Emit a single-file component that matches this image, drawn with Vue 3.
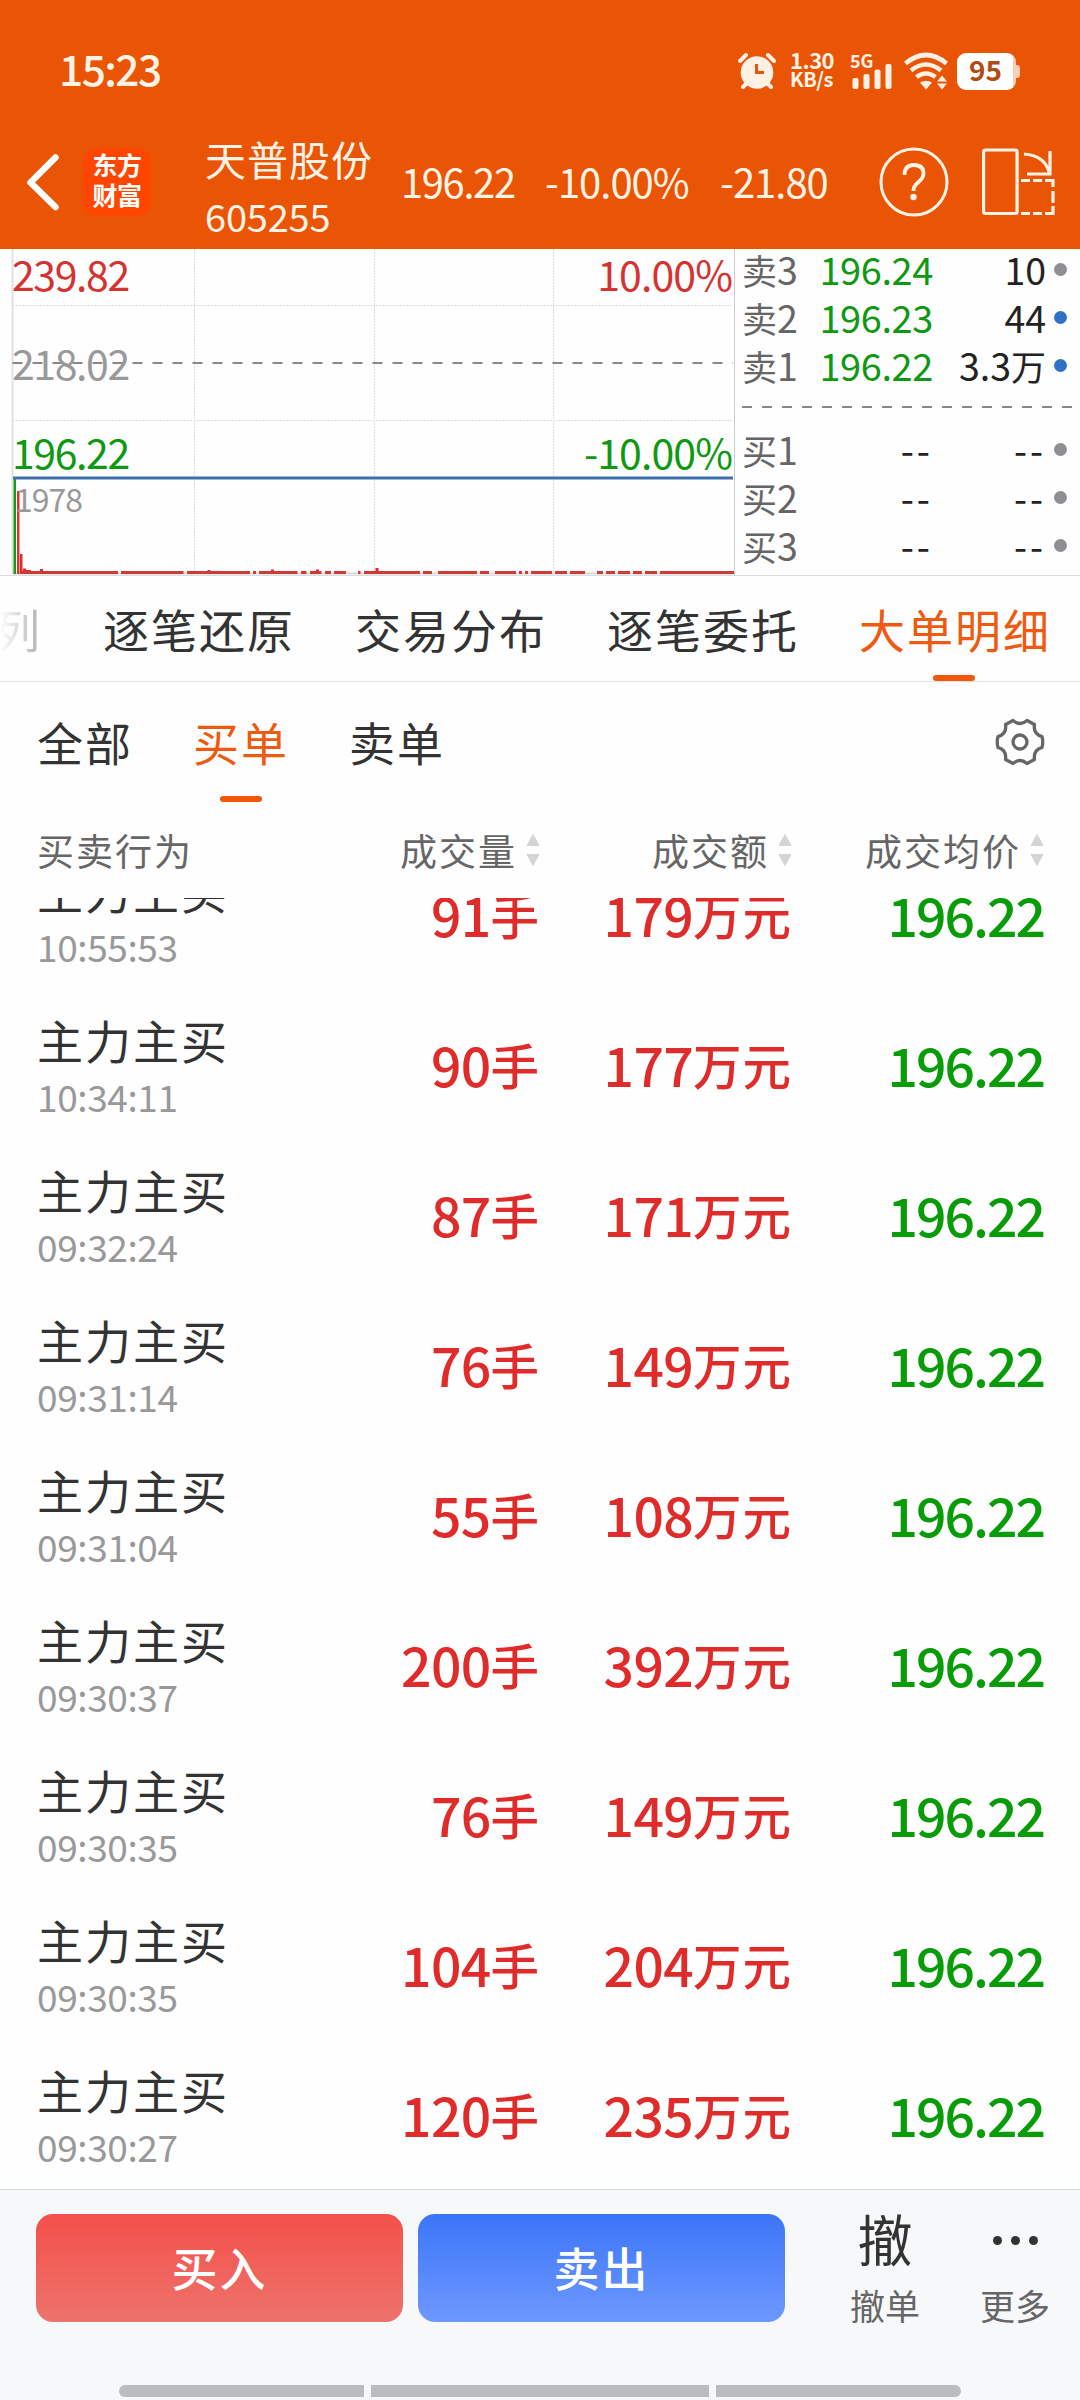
<script setup>
import {ref} from "vue"

const quote = {name: "天普股份", code: "605255", price: "196.22", percent: "-10.00%", change: "-21.80"}

const sells = [
  {label: "卖", level: 3, price: "196.24", amount: "10", unit: "", dot: "gray"},
  {label: "卖", level: 2, price: "196.23", amount: "44", unit: "", dot: "blue"},
  {label: "卖", level: 1, price: "196.22", amount: "3.3", unit: "万", dot: "blue"},
]
const buys = [1, 2, 3]

const tabs = ["逐笔还原", "交易分布", "逐笔委托", "大单明细"]
const activeTab = ref("大单明细")
const filters = ["全部", "买单", "卖单"]
const activeFilter = ref("买单")

const columns = ["成交量", "成交额", "成交均价"]
const orders = [
  {time: "10:55:53", volume: 91, amount: 179},
  {time: "10:34:11", volume: 90, amount: 177},
  {time: "09:32:24", volume: 87, amount: 171},
  {time: "09:31:14", volume: 76, amount: 149},
  {time: "09:31:04", volume: 55, amount: 108},
  {time: "09:30:37", volume: 200, amount: 392},
  {time: "09:30:35", volume: 76, amount: 149},
  {time: "09:30:35", volume: 104, amount: 204},
  {time: "09:30:27", volume: 120, amount: 235},
]

// 成交量柱：[起点, 终点]，连续有成交的分钟合并成一段
const volumes = [
  [22, 118], [121, 183.5], [187, 250], [253, 256], [259, 297.5], [301, 306.5], [310, 321.5],
  [325, 331], [334, 346], [358, 360.5], [364, 420], [423, 432], [438, 477], [480, 489],
  [495, 516], [519, 522], [525, 528], [531, 552], [555, 567], [570, 585], [597, 603],
  [606, 615], [618, 630], [633, 642], [645, 657], [660, 734],
]
</script>

<template>
  <div class="page">
    <header class="top">
      <div class="status">
        <span class="clock">15:23</span>
        <svg class="alarm" width="38" height="38" viewBox="0 0 38 38">
          <circle cx="19" cy="20.500" r="16.300" fill="#fff0e6" />
          <path d="M2 9 L8 3 M30 3 L36 9" stroke="#fff0e6" stroke-width="4" stroke-linecap="round" />
          <path d="M8 32 L5 35 M30 32 L33 35" stroke="#fff0e6" stroke-width="4" stroke-linecap="round" />
          <path d="M18.500 12 V20.500 H26" fill="none" stroke="#e95504" stroke-width="3" />
        </svg>
        <div class="speed"><span>1.30</span><span class="kb">KB/s</span></div>
        <svg class="signal" width="44" height="38" viewBox="0 0 44 38">
          <text class="net" x="0" y="15.500">5G</text>
          <rect x="2.500" y="26" width="6" height="11" rx="2" />
          <rect x="13.500" y="22" width="6" height="15" rx="2" />
          <rect x="24.500" y="17.500" width="6" height="19.500" rx="2" />
          <rect x="35.500" y="12" width="6" height="25" rx="2" />
        </svg>
        <svg class="wifi" width="46" height="38" viewBox="0 0 46 38">
          <g fill="none" stroke="#fff0e6" stroke-width="4.600">
            <path d="M2.500 11.500 Q23 -5.500 43.500 11.500" />
            <path d="M8 18.500 Q23 6.500 38 18.500" />
            <path d="M13.500 25 Q23 18 32.500 25" />
          </g>
          <path d="M17 30.500 Q23 27 29 30.500 L23 37.500 Z" fill="#fff0e6" />
          <path d="M34 29.500 L39 23.500 L44 29.500 Z M34 31.500 L39 37.500 L44 31.500 Z" fill="#fff0e6" />
        </svg>
        <div class="battery"><span>95</span></div>
      </div>
      <div class="nav">
        <svg class="back" width="34" height="58" viewBox="0 0 34 58">
          <path d="M29.500 4.500 L4.500 29.500 L29.500 54" fill="none" stroke="#fff" stroke-width="6.500" stroke-linecap="round" stroke-linejoin="round" />
        </svg>
        <div class="logo"><span>东方</span><span>财富</span></div>
        <div class="stock">
          <span class="name">{{ quote.name }}</span>
          <span class="code">{{ quote.code }}</span>
        </div>
        <span class="price">{{ quote.price }}</span>
        <span class="percent">{{ quote.percent }}</span>
        <span class="change">{{ quote.change }}</span>
        <svg class="help" width="70" height="70" viewBox="0 0 70 70">
          <circle cx="35" cy="35" r="33" fill="none" stroke="#fff3e6" stroke-width="3" />
          <path d="M25.500 28 Q25.500 18 35 18 Q44.500 18 44.500 26.500 Q44.500 31 39 35.500 Q34.500 39 34.500 44" fill="none" stroke="#fff3e6" stroke-width="3.800" />
          <circle cx="34.500" cy="50" r="3.200" fill="#fff3e6" />
        </svg>
        <svg class="rotate" width="74" height="70" viewBox="0 0 74 70" fill="none" stroke="#fff3e6" stroke-width="3.200">
          <rect x="2.600" y="3" width="33.500" height="63.500" rx="2" />
          <path d="M43 7 C57 8 66 15 68.500 27" />
          <path d="M69 4 V27 H46" />
          <path d="M40 33.500 H49 M52 33.500 H61 M64 33.500 H72 V40 M72 44 V56 M72 59 V66.500 H64 M61 66.500 H52 M49 66.500 H40" />
        </svg>
      </div>
    </header>

    <section class="market">
      <svg class="chart" width="735" height="327" viewBox="0 249 735 327">
        <g stroke="#dcdcdc" stroke-dasharray="2 1">
          <path d="M194.500 249 V573 M374.500 249 V573 M553.500 249 V573 M13 305.500 H733 M13 420.500 H733" fill="none" />
        </g>
        <path d="M12.500 249 V574" stroke="#e2e2e2" stroke-width="2" />
        <path d="M734.500 249 V576" stroke="#ccc" />
        <path d="M13 573.500 H734" stroke="#d8d8d8" stroke-width="2" />
        <path d="M12.500 363 H733" stroke="#888" stroke-width="2" stroke-dasharray="10 10" />
        <text class="num gray" x="12" y="380">218.02</text>
        <text class="num red" x="12" y="291">239.82</text>
        <text class="num green" x="12" y="469">196.22</text>
        <text class="num red end" x="732" y="291">10.00%</text>
        <text class="num green end" x="732" y="469">-10.00%</text>
        <rect x="17" y="491" width="2.500" height="83" fill="#d83431" />
        <rect x="20" y="554" width="2.500" height="20" fill="#e02b2b" />
        <path d="M23 574 V568.500 H26 V570 H31 V571 H40 V569 H43 V574 Z M207.500 570 h3 v4 h-3 Z M271 569.500 h3 v4 h-3 Z M316 569.500 h3 v4 h-3 Z M375.500 568 h3 v6 h-3 Z" fill="#e02b2b" />
        <rect v-for="v in volumes" :key="v[0]" :x="v[0]" y="571" :width="v[1] - v[0]" height="3" fill="#cf3a37" />
        <text class="vol" x="15" y="511.500">1978</text>
        <rect x="13.500" y="478" width="2.500" height="96" fill="#189a1c" />
        <path d="M13 478 H733" stroke="#3f70ae" stroke-width="3" />
      </svg>
      <div class="book">
        <div v-for="s in sells" :key="s.level" class="level">
          <span class="label">{{ s.label }}<b>{{ s.level }}</b></span>
          <span class="bid">{{ s.price }}</span>
          <span class="qty">{{ s.amount }}<i v-if="s.unit">{{ s.unit }}</i></span>
          <span class="dot" :class="s.dot"></span>
        </div>
        <svg class="split" width="338" height="36" viewBox="0 0 338 36">
          <path d="M7 18 H338" stroke="#888" stroke-width="2" stroke-dasharray="10 10" />
        </svg>
        <div v-for="n in buys" :key="n" class="level">
          <span class="label">买<b>{{ n }}</b></span>
          <span class="bid none">--</span>
          <span class="qty none">--</span>
          <span class="dot gray"></span>
        </div>
      </div>
    </section>

    <nav class="tabs">
      <span class="cut">列</span>
      <span v-for="t in tabs" :key="t" class="tab" :class="{active: t === activeTab}" @click="activeTab = t">{{ t }}</span>
    </nav>

    <div class="filters">
      <span v-for="f in filters" :key="f" class="filter" :class="{active: f === activeFilter}" @click="activeFilter = f">{{ f }}</span>
      <svg class="gear" width="50" height="50" viewBox="-25 -25 50 50" fill="none" stroke="#666" stroke-width="3.300" stroke-linejoin="round">
        <path d="M-7 -21.500 Q0 -15.500 7 -21.500 L14.500 -17.500 Q13 -8 22 -5.500 Q23.500 0 22 5.500 Q13 8 14.500 17.500 L7 21.500 Q0 15.500 -7 21.500 L-14.500 17.500 Q-13 8 -22 5.500 Q-23.500 0 -22 -5.500 Q-13 -8 -14.500 -17.500 Z" />
        <circle r="7" />
      </svg>
    </div>

    <div class="thead">
      <span class="th first">买卖行为</span>
      <span v-for="c in columns" :key="c" class="th">
        {{ c }}
        <svg width="14" height="34" viewBox="0 0 14 34" fill="#d5d5d5" stroke="#d5d5d5" stroke-linejoin="round">
          <path d="M7 1.500 L13 12.500 H1 Z M7 32.500 L13 21.500 H1 Z" />
        </svg>
      </span>
    </div>

    <main class="list">
      <div v-for="(o, i) in orders" :key="i" class="row">
        <div class="action">
          <span class="kind">主力主买</span>
          <span class="time">{{ o.time }}</span>
        </div>
        <span class="cell up">{{ o.volume }}<i>手</i></span>
        <span class="cell up">{{ o.amount }}<i>万元</i></span>
        <span class="cell down">196.22</span>
      </div>
    </main>

    <footer class="bottom">
      <div class="actions">
        <button class="btn buy">买入</button>
        <button class="btn sell">卖出</button>
        <div class="tool">
          <span class="glyph">撤</span>
          <span class="caption">撤单</span>
        </div>
        <div class="tool more">
          <span class="dots"><i></i><i></i><i></i></span>
          <span class="caption">更多</span>
        </div>
      </div>
      <div class="gesture"><i></i><i class="mid"></i><i></i></div>
    </footer>
  </div>
</template>

<style>
body {
  margin: 0;
  background: #fff;
}
</style>

<style scoped>
.page {
  width: 1080px;
  height: 2400px;
  overflow: hidden;
  display: flex;
  flex-direction: column;
  background: #fefefe;
  color: #333;
  font-family: "Noto Sans CJK SC", "Noto Sans", sans-serif;
  white-space: nowrap;
}
i, b {
  font-style: normal;
  font-weight: inherit;
}
svg {
  display: block;
  flex: none;
}
.top {
  height: 249px;
  flex: none;
  background: #e95504;
  color: #fff3e6;
  z-index: 1;
}
.status {
  height: 106px;
  padding: 36px 64px 0 59px;
  box-sizing: border-box;
  display: flex;
  align-items: center;
}
.clock {
  font-size: 42.5px;
  line-height: 60px;
  font-weight: 500;
  letter-spacing: -1.6px;
  margin-top: -6px;
  margin-right: auto;
}
.alarm {
  margin-right: 14px;
}
.speed {
  width: 46px;
  display: flex;
  flex-direction: column;
  font-size: 22px;
  line-height: 20px;
  font-weight: 700;
  letter-spacing: -0.5px;
  margin-right: 14px;
  margin-top: -4px;
}
.kb {
  font-size: 20px;
}
.signal {
  fill: #fff0e6;
  margin-right: 9px;
}
.net {
  font-size: 18px;
  font-weight: 700;
}
.wifi {
  margin-right: 8px;
}
.battery {
  width: 59px;
  height: 37px;
  border-radius: 9px;
  background: linear-gradient(90deg, #fff 56px, #fbd0b4 56px);
  color: #b04b16;
  font-size: 28px;
  line-height: 33px;
  font-weight: 700;
  position: relative;
  display: flex;
}
.battery span {
  width: 57px;
  text-align: center;
}
.battery::after {
  content: "";
  position: absolute;
  right: -4px;
  top: 12px;
  width: 4px;
  height: 13px;
  border-radius: 0 3px 3px 0;
  background: #fbd0b4;
}
.nav {
  height: 143px;
  display: flex;
  align-items: center;
  padding: 9px 0 0 26px;
  box-sizing: border-box;
  font-size: 40px;
  letter-spacing: -1px;
}
.logo {
  width: 68px;
  height: 68px;
  margin-left: 23px;
  border-radius: 14px;
  background: #ff4600;
  color: #fff;
  font-size: 25px;
  line-height: 30px;
  font-weight: 700;
  letter-spacing: -0.5px;
  display: flex;
  flex-direction: column;
  align-items: center;
  justify-content: center;
  padding: 0 0 6px 0;
  box-sizing: border-box;
}
.stock {
  width: 196px;
  margin: 9px 0 0 54px;
  display: flex;
  flex-direction: column;
}
.name {
  font-size: 41px;
  line-height: 58px;
  letter-spacing: 1px;
}
.code {
  font-size: 38px;
  line-height: 58px;
  letter-spacing: -0.2px;
}
.price {
  width: 144px;
  letter-spacing: -1.4px;
}
.percent {
  width: 175px;
}
.change {
  width: 159px;
}
.price, .percent, .change {
  margin-top: -2px;
}
.rotate {
  margin-left: 32px;
}
.market {
  height: 326px;
  flex: none;
  display: flex;
  border-bottom: 1px solid #ddd;
}
.num {
  font-size: 41px;
  letter-spacing: -1.4px;
}
.end {
  text-anchor: end;
  letter-spacing: -0.9px;
}
.vol {
  font-size: 32px;
  letter-spacing: -1px;
  fill: #999;
}
.red {
  fill: #d43331;
}
.green {
  fill: #0f9812;
}
.num.gray {
  fill: #999;
}
.book {
  flex: 1;
  margin-top: -4px;
}
.level {
  height: 48px;
  display: flex;
  align-items: center;
  font-size: 37.5px;
  line-height: 48px;
}
.label {
  width: 72px;
  padding-left: 7px;
  color: #666;
  font-size: 35px;
}
.label b {
  font-size: 37.5px;
}
.bid {
  width: 119px;
  text-align: right;
  color: #0f9812;
  font-size: 38px;
  letter-spacing: -0.4px;
}
.qty {
  width: 113px;
  text-align: right;
  color: #222;
}
.qty i {
  font-size: 35px;
}
.none {
  color: #222;
  letter-spacing: 3px;
}
.dot {
  width: 13px;
  height: 13px;
  border-radius: 50%;
  margin-left: 8px;
}
.dot.gray {
  background: #8e8e93;
}
.dot.blue {
  background: #2f72c4;
}
.tabs {
  height: 105px;
  flex: none;
  border-bottom: 1px solid #e2e2e2;
  display: flex;
  font-size: 46px;
  line-height: 105px;
  letter-spacing: 2px;
}
.cut {
  width: 109px;
  flex: none;
  margin-left: -6px;
  background: linear-gradient(90deg, #fefefe 6px, #aaa 50px);
  background-clip: text;
  color: transparent;
}
.tab {
  width: 190px;
  margin-right: 62px;
  position: relative;
  flex: none;
}
.active {
  color: #ee5a10;
}
.active::after {
  content: "";
  position: absolute;
  left: 50%;
  margin-left: -21px;
  bottom: 0;
  width: 42px;
  height: 6px;
  border-radius: 3px;
  background: #f3570c;
}
.filters {
  height: 120px;
  flex: none;
  padding: 0 35px 0 37px;
  display: flex;
  font-size: 46px;
  line-height: 118px;
  letter-spacing: 2px;
}
.filter {
  margin-right: 60px;
  position: relative;
}
.gear {
  margin: 35px 0 0 auto;
}
.thead {
  height: 96px;
  flex: none;
  padding: 0 37px;
  display: grid;
  grid-template-columns: 250px 253px 252px 252px;
  font-size: 37px;
  line-height: 92px;
  letter-spacing: 2px;
  color: #666;
}
.th {
  display: flex;
  align-items: center;
  justify-content: flex-end;
  gap: 9px;
}
.th.first {
  justify-content: flex-start;
}
.list {
  height: 1291px;
  flex: none;
  overflow: hidden;
}
.row {
  height: 150px;
  padding: 0 37px;
  display: grid;
  grid-template-columns: 250px 253px 252px 252px;
}
.row:first-child {
  margin-top: -56px;
}
.action {
  display: flex;
  flex-direction: column;
  padding-top: 15px;
}
.kind {
  font-size: 46px;
  line-height: 64px;
  letter-spacing: 2px;
}
.time {
  font-size: 37px;
  line-height: 50px;
  letter-spacing: -0.4px;
  color: #999;
}
.cell {
  font-size: 53.5px;
  line-height: 144px;
  font-weight: 500;
  text-align: right;
  letter-spacing: -0.7px;
}
.cell i {
  font-size: 48.5px;
  letter-spacing: 1px;
  position: relative;
  top: -2px;
}
.up {
  color: #e02b2b;
}
.down {
  color: #089c08;
  letter-spacing: -2px;
}
.bottom {
  flex: 1;
  background: #f7f8fa;
  border-top: 1px solid #d3dcd3;
}
.actions {
  height: 108px;
  padding: 24px 0 0 36px;
  display: flex;
}
.btn {
  width: 367px;
  height: 108px;
  margin: 0 15px 0 0;
  padding: 0 0 4px;
  border: none;
  border-radius: 17px;
  color: #fff;
  font: 500 46px "Noto Sans CJK SC", sans-serif;
  letter-spacing: 2px;
}
.buy {
  background: linear-gradient(#f5504a, #ec736c);
}
.sell {
  background: linear-gradient(#3b75f8, #6e98ff);
}
.tool {
  width: 130px;
  margin-left: 20px;
  display: flex;
  flex-direction: column;
  align-items: center;
}
.more {
  margin-left: 0;
}
.glyph, .dots {
  height: 67px;
  flex: none;
  font-size: 55px;
  line-height: 46px;
}
.dots {
  display: flex;
  gap: 9px;
}
.dots i {
  width: 9px;
  height: 9px;
  margin-top: 22px;
  border-radius: 50%;
  background: #333;
}
.caption {
  font-size: 35px;
  line-height: 48px;
  color: #666;
}
.gesture {
  display: flex;
  gap: 7px;
  justify-content: center;
  margin-top: 63px;
}
.gesture i {
  width: 245px;
  height: 12px;
  background: #bbbcbe;
}
.gesture i:first-child {
  border-radius: 6px 0 0 6px;
}
.gesture i:last-child {
  border-radius: 0 6px 6px 0;
}
.gesture .mid {
  width: 338px;
}
</style>
